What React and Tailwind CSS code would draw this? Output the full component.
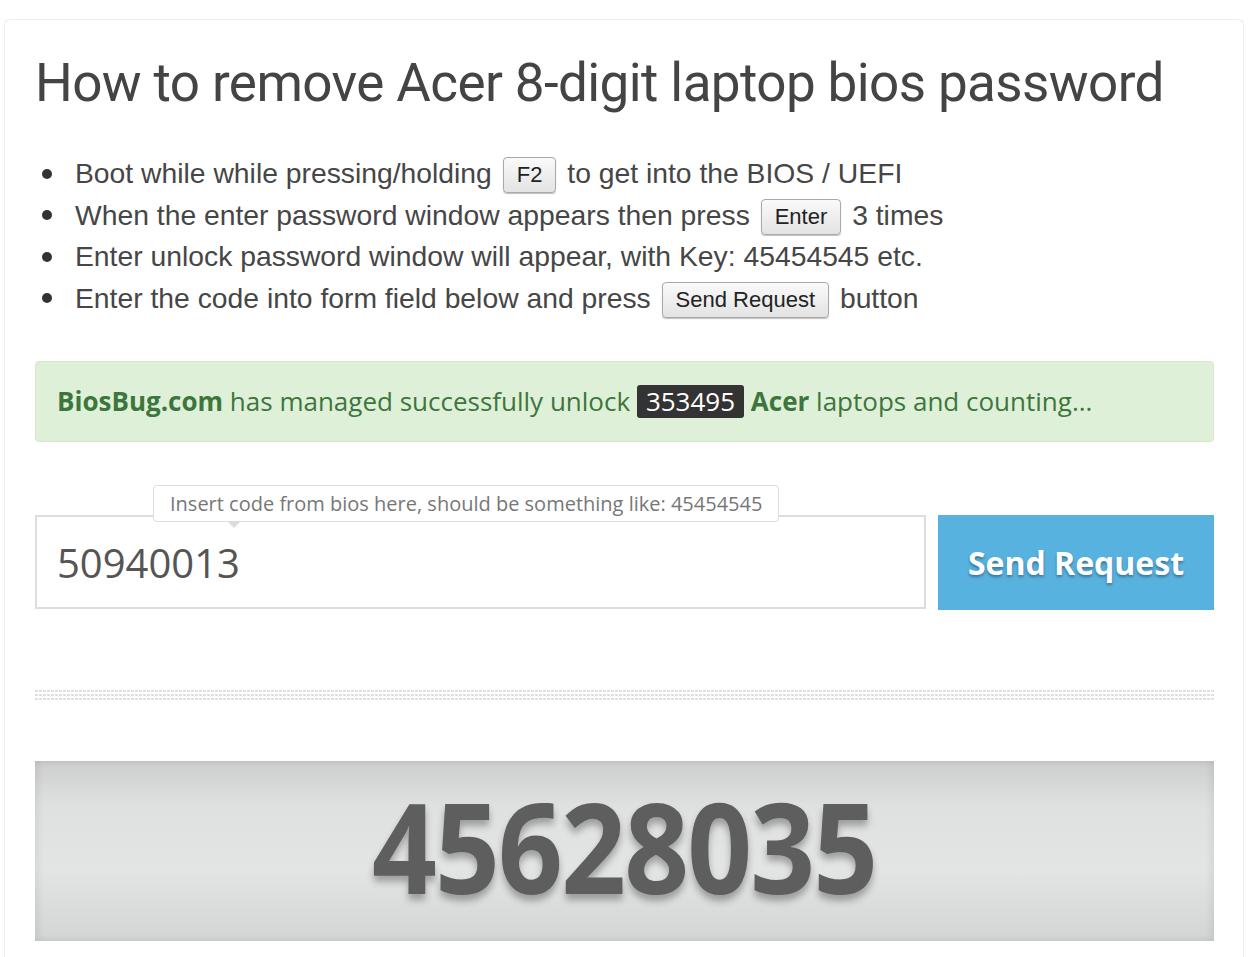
const steps = [
  { before: "Boot while while pressing/holding", key: "F2", after: "to get into the BIOS / UEFI" },
  { before: "When the enter password window appears then press", key: "Enter", after: "3 times" },
  { before: "Enter unlock password window will appear, with Key: 45454545 etc." },
  { before: "Enter the code into form field below and press", key: "Send Request", after: "button" },
];

function Kbd({ children }) {
  return (
    <kbd className="mx-[3px] inline-block rounded-[4px] border border-[#a9a9a9] bg-gradient-to-b from-[#fafafa] to-[#e3e3e3] px-[13px] py-[3px] align-[1px] font-['Liberation_Sans',Arial,sans-serif] text-[22px] leading-[28px] text-[#222] shadow-[0_1px_1px_rgba(0,0,0,0.25)]">
      {children}
    </kbd>
  );
}

function DottedRule() {
  const row = "h-[2px] bg-[repeating-linear-gradient(90deg,#e0e0e0_0_3px,transparent_3px_4px)]";
  return (
    <div className="flex flex-col gap-[2px]">
      <div className={row} />
      <div className={row} />
      <div className={row} />
    </div>
  );
}

export default function App() {
  return (
    <div className="min-h-screen bg-white pl-[4px] pr-[4px] pt-[19px]">
      <div className="rounded-t-[6px] border border-b-0 border-[#efefef] pb-[17px] pl-[30px] pr-[29px] pt-[30px] shadow-[0_0_2px_rgba(0,0,0,0.04)]">
        <h1 className="whitespace-nowrap font-['Roboto',sans-serif] text-[53px] leading-[66px] tracking-[-0.6px] text-[#444]">
          How to remove Acer 8-digit laptop bios password
        </h1>

        <ul className="mt-[37px] font-['Liberation_Sans',Arial,sans-serif] text-[28.3px] leading-[41.5px] text-[#464646]">
          {steps.map((s, i) => (
            <li key={i} className="flex items-center">
              <span className="ml-[7px] mr-[23px] h-[10px] w-[10px] shrink-0 rounded-full bg-[#333]" />
              <span className="whitespace-nowrap">
                {s.before}
                {s.key && (
                  <>
                    {" "}
                    <Kbd>{s.key}</Kbd>{" "}
                  </>
                )}
                {s.after}
              </span>
            </li>
          ))}
        </ul>

        <div className="mt-[42px] rounded-[4px] border border-[#d6e9c6] bg-[#dff0d8] px-[21px] py-[23px] font-['Open_Sans',sans-serif] text-[26px] leading-[33px] text-[#3c763d]">
          <b className="font-bold">BiosBug.com</b> has managed successfully unlock{" "}
          <span className="inline-block rounded-[3px] bg-[#333] px-[9px] leading-[33px] text-white">353495</span>{" "}
          <b className="font-bold">Acer</b> laptops and counting...
        </div>

        <div className="mt-[73px] flex gap-[12px]">
          <div className="relative flex-1">
            <div className="absolute bottom-[calc(100%-7px)] left-[118px] whitespace-nowrap rounded-[4px] border border-[#dcdcdc] bg-white px-[16px] py-[4px] font-['Open_Sans',sans-serif] text-[20px] leading-[27px] text-[#777]">
              Insert code from bios here, should be something like: 45454545
              <span className="absolute left-[73px] top-full h-0 w-0 border-x-[7px] border-t-[7px] border-x-transparent border-t-[#dcdcdc]" />
            </div>
            <input
              defaultValue="50940013"
              className="h-[94px] w-full border-2 border-[#dddddd] bg-white px-[20px] font-['Open_Sans',sans-serif] text-[40px] text-[#555] outline-none"
            />
          </div>
          <button className="h-[95px] w-[276px] bg-[#58b2e0] font-['Open_Sans',sans-serif] text-[32px] font-bold text-white [text-shadow:0_2px_3px_rgba(0,0,0,0.35)]">
            Send Request
          </button>
        </div>

        <div className="mt-[80px]">
          <DottedRule />
        </div>

        <div className="mt-[61px] flex h-[180px] items-center justify-center bg-[linear-gradient(180deg,#cdcdcd_0%,#dfe1e1_25%,#e3e5e5_60%,#d3d5d5_100%)] pb-[12px] shadow-[inset_4px_0_6px_rgba(0,0,0,0.06),inset_-4px_0_6px_rgba(0,0,0,0.06)]">
          <span className="inline-block origin-center scale-x-[0.9] font-['Open_Sans',sans-serif] text-[126px] font-bold leading-[140px] tracking-[-2px] text-[#5e5e5e] [text-shadow:0_6px_8px_rgba(0,0,0,0.3)]">
            45628035
          </span>
        </div>
      </div>
    </div>
  );
}
